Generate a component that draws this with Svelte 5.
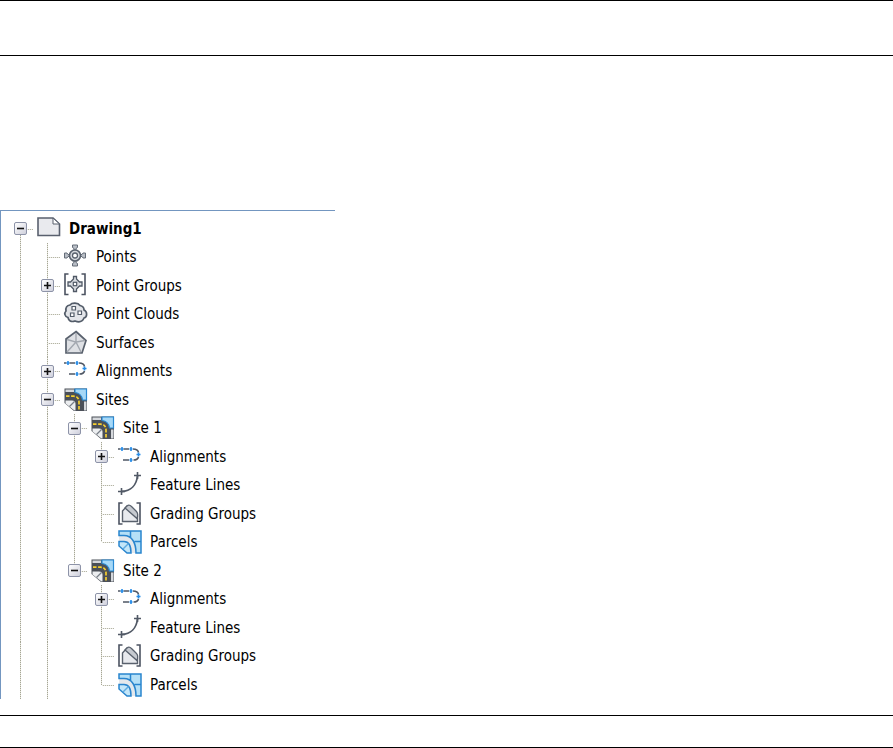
<script>
    let items = $state([
        { name: 'Drawing1', icon: 'drawing', level: 0, open: true },
        { name: 'Points', icon: 'points', level: 1 },
        { name: 'Point Groups', icon: 'pointGroups', level: 1, open: false },
        { name: 'Point Clouds', icon: 'clouds', level: 1 },
        { name: 'Surfaces', icon: 'surfaces', level: 1 },
        { name: 'Alignments', icon: 'alignments', level: 1, open: false },
        { name: 'Sites', icon: 'sites', level: 1, open: true },
        { name: 'Site 1', icon: 'sites', level: 2, open: true },
        { name: 'Alignments', icon: 'alignments', level: 3, open: false },
        { name: 'Feature Lines', icon: 'feature', level: 3 },
        { name: 'Grading Groups', icon: 'grading', level: 3 },
        { name: 'Parcels', icon: 'parcels', level: 3, last: true },
        { name: 'Site 2', icon: 'sites', level: 2, open: true, last: true },
        { name: 'Alignments', icon: 'alignments', level: 3, open: false },
        { name: 'Feature Lines', icon: 'feature', level: 3 },
        { name: 'Grading Groups', icon: 'grading', level: 3 },
        { name: 'Parcels', icon: 'parcels', level: 3, last: true }
    ]);

    // works out which rows show and which guide lines run through each one
    let rows = $derived.by(() => {
        let result = [];
        let running = [];
        let closedAt = Infinity;
        for (const item of items) {
            if (item.level > closedAt) continue;
            closedAt = item.open === false ? item.level : Infinity;
            running[item.level] = !item.last;
            result.push({ item, guides: running.slice(0, item.level) });
        }
        return result;
    });

    function toggle(item) {
        item.open = !item.open;
    }
</script>

{#snippet icon(name)}
    <svg class="icon" viewBox="0 0 24 24" aria-hidden="true">
        {#if name === 'drawing'}
            <path d="M1 1h15l6.500 6v11.500H1z" fill="#e9eaee" stroke="#59606e" stroke-width="1.600" />
            <path d="M16 1v6h6.500z" fill="#fff" stroke="#59606e" />
        {:else if name === 'points'}
            <path d="M8.500 0h5v2.500l-1.500 1v3h-2v-3l-1.500-1zM8.500 21h5v-2.500l-1.500-1v-3h-2v3l-1.500 1zM0.500 8v5h2.500l1-1.500h3v-2h-3l-1-1.500zM21.500 8v5h-2.500l-1-1.500h-3v-2h3l1-1.500z" fill="#b9bec6" stroke="#646c78" />
            <circle cx="11" cy="10.500" r="5.500" fill="#d6d9de" stroke="#59616d" stroke-width="1.600" />
            <circle cx="11" cy="10.500" r="2.500" fill="#fff" stroke="#59616d" stroke-width="1.300" />
        {:else if name === 'pointGroups'}
            <path d="M4.500 0H1v20.500h3.500M17.500 0H21v20.500h-3.500" fill="none" stroke="#4c5361" stroke-width="1.600" />
            <path d="M9.500 2.500h3v2.500l3 3H18v4h-2.500l-3 3v2.500h-3v-2.500l-3-3H4V8h2.500l3-3z" fill="#d9dce1" stroke="#505966" stroke-width="1.300" />
            <rect x="9.300" y="8.300" width="3.400" height="3.400" fill="#fff" stroke="#505966" stroke-width="1.200" />
        {:else if name === 'clouds'}
            <path d="M6 3C8 0.500 14 0.500 16 3.500c3 0.500 4 2 4 4.500C23.500 9.500 23.500 15 20 16c-1.500 3.500-5 4.500-9 3C7 20.500 4.500 18.500 4 15.500 0.500 14.500 0 11 2 9 1.500 6 3 3.500 6 3z" fill="#e3e5e9" stroke="#535c69" stroke-width="1.700" />
            <path d="M8 4.500h3.500V8H8zM6.500 11H10v3.500H6.500zM14 9h3.500v3.500H14z" fill="#fff" stroke="#535c69" stroke-width="1.200" />
        {:else if name === 'surfaces'}
            <path d="M12 0.500l10 9-4 12.500H2V8z" fill="#dfe1e5" stroke="#59616d" stroke-width="1.700" />
            <path d="M12 2v9M21 9.500l-9 1.500 5 10M3 21l9-10-9-2.500" fill="none" stroke="#a3a8b0" stroke-width="1.400" />
        {:else if name === 'alignments'}
            <path d="M0 4h2.500M5.500 4h5.500M15 4c3 0 5 1 5.500 3.500M20.500 12c-.5 2-2 3-5 3M5 15h6" fill="none" stroke="#4f5764" stroke-width="1.600" />
            <path d="M2.500 4h3M4 2v4M11.500 4h3M13 2v4M11.500 15h3M13 13v4M18.500 9.500h4M20.500 7.500v4" stroke="#268ce8" stroke-width="1.600" />
        {:else if name === 'sites'}
            <path d="M0.500 0.500H23v22.500H10L0.500 15z" fill="#4b5058" />
            <path d="M11 1h11.500v11H18.500C18 8 15.500 5 11 4.500z" fill="#a6d8f7" stroke="#2889d4" stroke-width="1.200" />
            <path d="M1.500 1.500H10v2.500H1.500zM20 13.500h2.500v9H20z" fill="#d5d8dc" />
            <path d="M2 8.200h7.500c3.500 0 5.500 2 5.500 6V22" fill="none" stroke="#f6cf2e" stroke-width="1.700" stroke-dasharray="3.500 1.600" />
            <path d="M1.500 12.500h6.500c2.500 0 3.500 1.500 3.500 3.500v6.500h-1L1.500 15.500z" fill="#eceef0" />
            <path d="M5.500 18.500l5-5" stroke="#777e87" stroke-width="1.200" />
        {:else if name === 'feature'}
            <path d="M3.500 18.500C13 18 18.500 12 19.500 3" fill="none" stroke="#515966" stroke-width="1.800" />
            <path d="M0 18.500h7M3.500 15v7M16 2.500h7M19.500-1v7" stroke="#515966" stroke-width="1.600" />
        {:else if name === 'grading'}
            <path d="M4.500 1H1v21h3.500M18.500 1H22v21h-3.500" fill="none" stroke="#4c5361" stroke-width="1.600" />
            <path d="M4.500 9L9 4l10.500 10v5.500h-15z" fill="#e8eaee" stroke="#59616d" stroke-width="1.400" />
            <path d="M7 6l2-2c1.500-1.300 3-1 4.500.5l5 5c1.500 1.500 1.500 4 .5 7z" fill="#c6cad0" stroke="#59616d" stroke-width="1.300" />
        {:else}
            <path d="M1 1h22v22h-5C18 13 14 6 6 5.500H1z" fill="#b5e0f7" />
            <path d="M1 5.500h5C14 6 18 13 18 23h-5C13 16 11 11.500 6 11.500H1z" fill="#e4e8ec" />
            <path d="M1 5.500V1h22v22h-5C18 13 14 5.500 6 5.500zM12.500 1v6.500M16.500 11.500H23" fill="none" stroke="#2985ce" stroke-width="1.500" />
            <path d="M1 11.500h5c5 0 7 4.500 7 11.500H9L1 16z" fill="#c3e6f9" stroke="#2985ce" stroke-width="1.500" />
            <path d="M5 19l5.500-5.500" stroke="#5faae0" stroke-width="1.500" />
        {/if}
    </svg>
{/snippet}

<div class="page">
    <header></header>
    <main>
        <ul class="tree">
            {#each rows as { item, guides }}
                <li class="row" class:root={item.level === 0}>
                    {#each guides as guide}
                        <span class="cell" class:line={guide}></span>
                    {/each}
                    <span class="cell branch" class:last={item.last} class:top={item.level === 0}>
                        {#if item.open !== undefined}
                            <button aria-label={(item.open ? 'Collapse ' : 'Expand ') + item.name} aria-expanded={item.open} onclick={() => toggle(item)}>
                                <svg viewBox="0 0 11 11" aria-hidden="true">
                                    <path d={item.open ? 'M2 5.5h7' : 'M2 5.5h7M5.5 2v7'} stroke="#111" stroke-width="1.600" />
                                </svg>
                            </button>
                        {/if}
                    </span>
                    {@render icon(item.icon)}
                    <span class="name">{item.name}</span>
                </li>
            {/each}
        </ul>
    </main>
    <footer></footer>
</div>

<style>
    :global(body) {
        margin: 0;
        background: #fff;
    }

    .page {
        display: flex;
        flex-direction: column;
        min-height: 100vh;
        font-family: Tahoma, "DejaVu Sans Condensed", "DejaVu Sans", sans-serif;
        font-size: 15px;
        color: #000;
    }

    header {
        height: 54px;
        border-top: 1px solid #000;
        border-bottom: 1px solid #000;
    }

    main {
        flex: 1;
        padding: 154px 0 16px;
    }

    footer {
        height: 31px;
        border-top: 1px solid #000;
        border-bottom: 1px solid #000;
    }

    .tree {
        list-style: none;
        margin: 0;
        padding: 3px 0 0 6px;
        width: 37.5%;
        min-width: 280px;
        border-top: 1px solid #7396c0;
        border-left: 1px solid #7396c0;
        box-sizing: border-box;
    }

    .row {
        display: flex;
        align-items: center;
        height: 28px;
    }

    .row:nth-child(odd) {
        height: 29px;
    }

    .cell {
        position: relative;
        display: flex;
        align-items: center;
        justify-content: center;
        align-self: stretch;
        width: 27px;
    }

    /* dotted vertical guides */
    .line::before,
    .branch::before {
        content: '';
        position: absolute;
        top: 0;
        bottom: 0;
        left: 13px;
        width: 1px;
        background: repeating-linear-gradient(#a5a595 0 1px, #e6e6dc 1px 2px);
    }

    .branch.last::before {
        bottom: 50%;
    }

    .branch.top::before {
        top: 50%;
    }

    .branch::after {
        content: '';
        position: absolute;
        top: 50%;
        left: 14px;
        right: 1px;
        height: 1px;
        background: repeating-linear-gradient(90deg, #ecece4 0 1px, #b4b4a6 1px 2px);
    }

    button {
        position: relative;
        z-index: 1;
        display: flex;
        width: 13px;
        height: 13px;
        padding: 0;
        border: 1px solid #8d93a8;
        border-radius: 2px;
        background: linear-gradient(135deg, #fff, #cfd0dc);
        cursor: pointer;
    }

    button svg {
        width: 100%;
        height: 100%;
    }

    .icon {
        width: 24px;
        height: 24px;
        margin: 0 8px 0 3px;
        overflow: visible;
    }

    .name {
        white-space: nowrap;
    }

    .root .name {
        font-weight: bold;
    }
</style>
